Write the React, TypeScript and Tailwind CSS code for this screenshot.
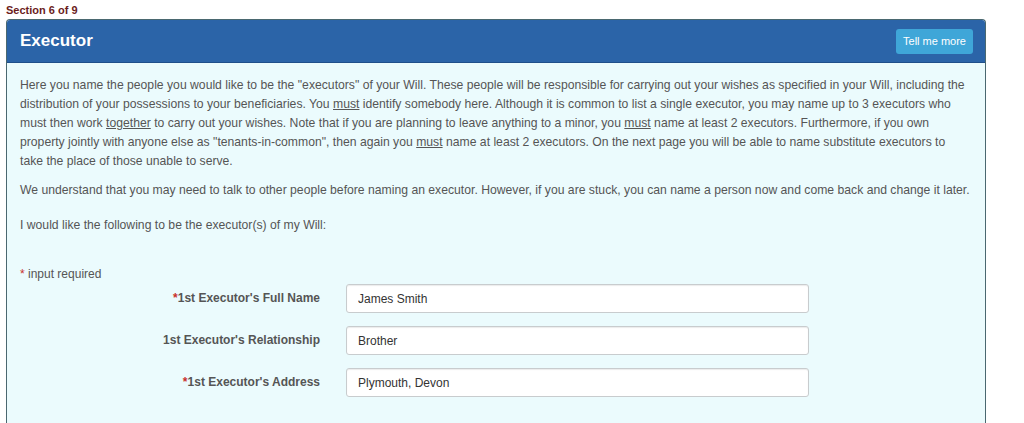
export default function App() {
  const rows = [
    { label: "1st Executor's Full Name", value: "James Smith", required: true },
    { label: "1st Executor's Relationship", value: "Brother", required: false },
    { label: "1st Executor's Address", value: "Plymouth, Devon", required: true },
  ];

  return (
    <div className="min-h-screen bg-white font-['Liberation_Sans',Arial,sans-serif]">
      <div className="w-[986px] pl-[6px] pt-[3px]">
        <div className="text-[11px] font-bold leading-[14px] text-[#6b1c1c]">Section 6 of 9</div>

        <div className="mt-[2px] rounded-t-[4px] border border-b-0 border-[#4a6870]">
          {/* Header */}
          <div className="flex h-[43px] items-center justify-between rounded-t-[3px] border-b border-[#1f4f8a] bg-[#2b64a8] pl-[13px] pr-[12px]">
            <h1 className="text-[17px] font-bold text-white">Executor</h1>
            <button className="h-[25px] rounded-[3px] bg-[#3fa6d8] px-[7px] text-[11px] text-white">
              Tell me more
            </button>
          </div>

          {/* Body */}
          <div className="bg-[#ebfbfd] pb-[40px] pl-[13px] pr-[13px] pt-[13px] text-[12.2px] leading-[19px] text-[#555]">
            <p className="pr-[7px]">
              Here you name the people you would like to be the "executors" of your Will. These people will be
              responsible for carrying out your wishes as specified in your Will, including the distribution of your
              possessions to your beneficiaries. You <u>must</u> identify somebody here. Although it is common to list a
              single executor, you may name up to 3 executors who must then work <u>together</u> to carry out your
              wishes. Note that if you are planning to leave anything to a minor, you <u>must</u> name at least 2
              executors. Furthermore, if you own property jointly with anyone else as "tenants-in-common", then again
              you <u>must</u> name at least 2 executors. On the next page you will be able to name substitute executors
              to take the place of those unable to serve.
            </p>
            <p className="mt-[10px]">
              We understand that you may need to talk to other people before naming an executor. However, if you are
              stuck, you can name a person now and come back and change it later.
            </p>
            <p className="mt-[16px]">I would like the following to be the executor(s) of my Will:</p>

            <p className="mt-[32px] text-[12px] leading-[14px]">
              <span className="text-[#c9302c]">*</span> input required
            </p>

            <div className="mt-[3px] flex flex-col gap-[13px]">
              {rows.map((row) => (
                <div key={row.label} className="flex items-center">
                  <label className="w-[300px] text-right text-[12px] font-bold text-[#555]">
                    {row.required && <span className="text-[#c9302c]">*</span>}
                    {row.label}
                  </label>
                  <input
                    readOnly
                    value={row.value}
                    className="ml-[26px] h-[29px] w-[463px] rounded-[3px] border border-[#c8ccce] bg-white px-[11px] text-[12px] text-[#333] shadow-[inset_0_1px_1px_rgba(0,0,0,0.08)] outline-none"
                  />
                </div>
              ))}
            </div>
          </div>
        </div>
      </div>
    </div>
  );
}
